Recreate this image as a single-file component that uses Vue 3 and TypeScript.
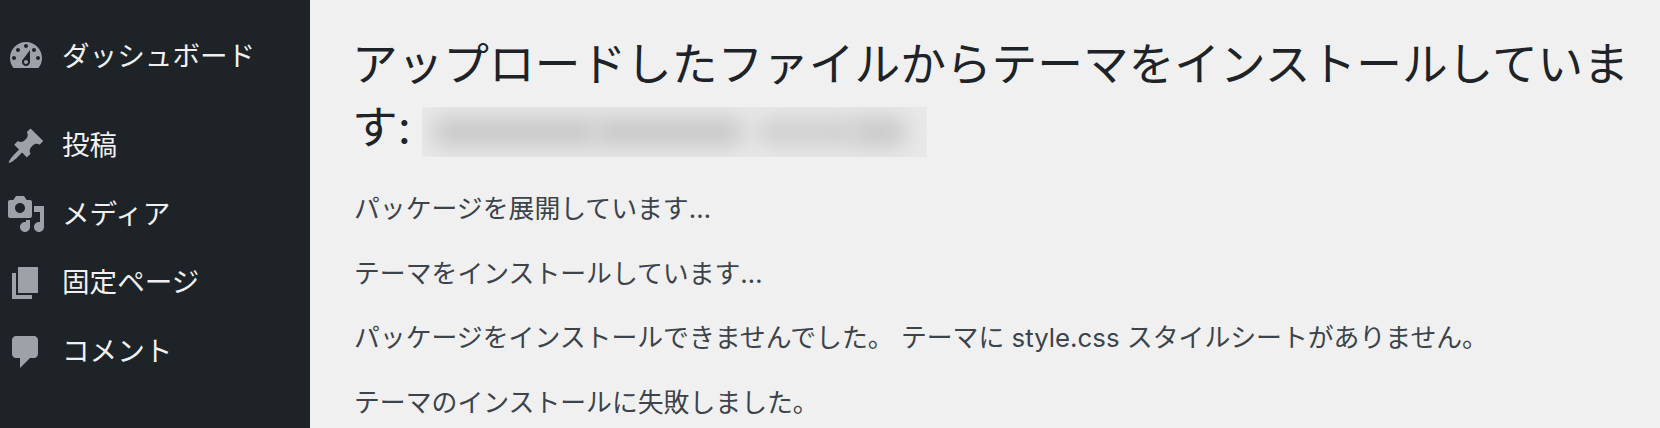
<script setup lang="ts">
interface Item { label: string; d: string; first?: boolean }
const items: Item[] = [
  { label: 'ダッシュボード', first: true, d: 'M3.76 16h12.48c1.1-1.37 1.76-3.11 1.76-5 0-4.42-3.58-8-8-8s-8 3.58-8 8c0 1.89.66 3.63 1.76 5zM10 4c.55 0 1 .45 1 1s-.45 1-1 1-1-.45-1-1 .45-1 1-1zM6 6c.55 0 1 .45 1 1s-.45 1-1 1-1-.45-1-1 .45-1 1-1zm8 0c.55 0 1 .45 1 1s-.45 1-1 1-1-.45-1-1 .45-1 1-1zm-5.37 5.55L12 7v6c0 1.1-.9 2-2 2s-2-.9-2-2c0-.57.24-1.08.63-1.45zM4 10c.55 0 1 .45 1 1s-.45 1-1 1-1-.45-1-1 .45-1 1-1zm12 0c.55 0 1 .45 1 1s-.45 1-1 1-1-.45-1-1 .45-1 1-1zm-5 3c0-.55-.45-1-1-1s-1 .45-1 1 .45 1 1 1 1-.45 1-1z' },
  { label: '投稿', d: 'M10.44 3.02l1.82-1.82 6.36 6.35-1.83 1.82c-1.05-.68-2.48-.57-3.41.36l-.75.75c-.92.93-1.04 2.35-.35 3.41l-1.83 1.82-2.41-2.41-2.8 2.79c-.42.42-3.38 2.71-3.8 2.29s1.86-3.39 2.28-3.81l2.79-2.79L4.1 9.36l1.83-1.82c1.05.69 2.48.57 3.41-.36l.75-.75c.93-.92 1.04-2.35.35-3.41z' },
  { label: 'メディア', d: 'M13 11V4c0-.55-.45-1-1-1h-1.67L9 1H5L3.67 3H2c-.55 0-1 .45-1 1v7c0 .55.45 1 1 1h10c.55 0 1-.45 1-1zM7 4.5c1.38 0 2.5 1.12 2.5 2.5S8.38 9.5 7 9.5 4.5 8.38 4.5 7 5.62 4.5 7 4.5zM14 6h5v10.5c0 1.38-1.12 2.5-2.5 2.5S14 17.88 14 16.5s1.12-2.5 2.5-2.5c.17 0 .34.02.5.05V9h-3V6zm-4 8.05V13h2v3.5c0 1.38-1.12 2.5-2.5 2.5S7 17.88 7 16.5 8.12 14 9.5 14c.17 0 .34.02.5.05z' },
  { label: '固定ページ', d: 'M6 15V2h10v13H6zm-1 1h8v2H3V5h2v11z' },
  { label: 'コメント', d: 'M5 2h9c1.1 0 2 .9 2 2v7c0 1.1-.9 2-2 2h-2l-5 5v-5H5c-1.1 0-2-.9-2-2V4c0-1.1.9-2 2-2z' },
]
const messages: string[] = [
  'パッケージを展開しています…',
  'テーマをインストールしています…',
  'パッケージをインストールできませんでした。 テーマに style.css スタイルシートがありません。',
  'テーマのインストールに失敗しました。',
]
</script>

<template>
  <div class="page">
    <nav class="sidebar">
      <div v-for="item in items" :key="item.label" class="item" :class="{ first: item.first }">
        <svg class="icon" viewBox="0 0 20 20" aria-hidden="true"><path :d="item.d" fill-rule="evenodd" /></svg>
        <span class="label">{{ item.label }}</span>
      </div>
    </nav>
    <main class="content">
      <h1 class="title">アップロードしたファイルからテーマをインストールしています: <span class="blur"><i class="b1"></i><i class="b2"></i><i class="b3"></i><i class="b4"></i></span></h1>
      <p v-for="m in messages" :key="m" class="msg">{{ m }}</p>
    </main>
  </div>
</template>

<style>
html, body { margin: 0; background: #f0f0f1; overflow: hidden; }
</style>

<style scoped>
.page {
  display: flex;
  width: 1660px;
  height: 428px;
  overflow: hidden;
  font-family: Inter, "Noto Sans CJK JP", sans-serif;
}
.sidebar {
  flex: 0 0 310px;
  background: #1d2327;
  padding-top: 22px;
  box-sizing: border-box;
}
.item {
  display: flex;
  align-items: center;
  height: 68.6px;
  padding-left: 6px;
  color: #f0f0f1;
}
.item.first { margin-bottom: 21px; }
.icon {
  width: 40px;
  height: 40px;
  fill: #9ca2a7;
  flex: none;
}
.label {
  margin-left: 16px;
  font-size: 27.6px;
  line-height: 1;
  white-space: nowrap;
}
.content {
  flex: 1;
  padding: 33px 20px 0 42px;
  min-width: 0;
  background: #f0f0f1;
}
.title {
  margin: 0 0 37px;
  font-size: 45.7px;
  font-weight: 400;
  line-height: 63px;
  color: #1d2327;
}
.blur {
  display: inline-block;
  position: relative;
  width: 505px;
  height: 50px;
  margin-left: -2px;
  vertical-align: middle;
  background: #e9e9e9;
  overflow: hidden;
}
.blur i {
  position: absolute;
  top: 10px;
  height: 30px;
  background: #c8c8c9;
  filter: blur(11px);
  border-radius: 12px;
}
.b1 { left: 10px; width: 165px; }
.b2 { left: 172px; width: 150px; }
.b3 { left: 335px; width: 100px; opacity: .75; }
.b4 { left: 430px; width: 55px; }
.msg {
  margin: 0 0 38.7px 2px;
  font-size: 25.85px;
  line-height: 26px;
  color: #3c434a;
}
</style>
